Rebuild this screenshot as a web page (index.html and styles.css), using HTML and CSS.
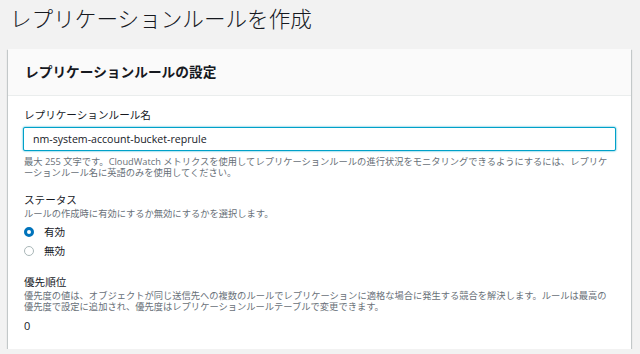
FILE: index.html
```html
<!DOCTYPE html>
<html lang="ja">
<head>
    <meta charset="UTF-8">
    <meta name="viewport" content="width=device-width, initial-scale=1.0">
    <title>レプリケーションルールを作成</title>
    <link rel="stylesheet" href="styles.css">
</head>
<body>
    <h1 class="page-title">レプリケーションルールを作成</h1>

    <div class="panel">
        <div class="panel-header">
            <h2>レプリケーションルールの設定</h2>
        </div>

        <div class="panel-body">
            <div class="form-group">
                <label for="ruleName" class="field-label">レプリケーションルール名</label>
                <input type="text" id="ruleName" class="text-input" value="nm-system-account-bucket-reprule">
                <p class="hint hint-below">最大 255 文字です。CloudWatch メトリクスを使用してレプリケーションルールの進行状況をモニタリングできるようにするには、レプリケーションルール名に英語のみを使用してください。</p>
            </div>

            <div class="form-group">
                <span class="field-label">ステータス</span>
                <p class="hint">ルールの作成時に有効にするか無効にするかを選択します。</p>
                <div class="radio-list">
                    <label class="radio-row">
                        <span class="radio checked"></span>
                        <span>有効</span>
                    </label>
                    <label class="radio-row">
                        <span class="radio"></span>
                        <span>無効</span>
                    </label>
                </div>
            </div>

            <div class="form-group">
                <span class="field-label">優先順位</span>
                <p class="hint hint-wide">優先度の値は、オブジェクトが同じ送信先への複数のルールでレプリケーションに適格な場合に発生する競合を解決します。ルールは最高の優先度で設定に追加され、優先度はレプリケーションルールテーブルで変更できます。</p>
                <div class="value">0</div>
            </div>
        </div>
    </div>
</body>
</html>
```

FILE: styles.css
```css
* {
    margin: 0;
    padding: 0;
    box-sizing: border-box;
    font-family: 'Open Sans', 'Noto Sans CJK JP', sans-serif;
}

body {
    background: #f2f2f2;
    padding: 0 9px 0 8px;
    color: #16191f;
}

.page-title {
    font-size: 21.6px;
    font-weight: 300;
    line-height: 26px;
    color: #16191f;
    margin: 6px 0 17px 2px;
}

.panel {
    background: #fff;
    box-shadow: 0 1px 1px 0 rgba(0,28,36,0.3), 1px 1px 1px 0 rgba(0,28,36,0.15), -1px 1px 1px 0 rgba(0,28,36,0.15);
}

.panel-header {
    background: #fafafa;
    border-bottom: 1px solid #eaeded;
    padding: 13px 17px 13px 17px;
}

.panel-header h2 {
    font-size: 13.7px;
    font-weight: 700;
    line-height: 20px;
}

.panel-body {
    padding: 11px 15px 15px 15px;
}

.form-group {
    margin-bottom: 14px;
}

.form-group:last-child {
    margin-bottom: 0;
}

.field-label {
    display: block;
    font-size: 10.6px;
    line-height: 16px;
    color: #16191f;
    margin-left: 1px;
}

.text-input {
    display: block;
    width: 100%;
    height: 24px;
    margin-top: 4px;
    padding: 0 9px;
    font-size: 10.6px;
    color: #16191f;
    border: 1px solid #00a1c9;
    border-radius: 2px;
    box-shadow: 0 0 2px #00a1c9;
    outline: none;
    background: #fff;
}

.hint {
    font-size: 9.27px;
    line-height: 11px;
    color: #687078;
    margin-left: 1px;
    line-break: loose;
}

.hint-below {
    margin-top: 5px;
    padding-right: 5px;
}

.hint-wide {
    padding-right: 8px;
}

.radio-list {
    margin-top: 3px;
}

.radio-row {
    display: flex;
    align-items: center;
    gap: 10px;
    height: 19px;
    font-size: 10.6px;
    color: #16191f;
}

.radio {
    width: 10px;
    height: 10px;
    margin-left: 1px;
    border-radius: 50%;
    border: 1px solid #aab7b8;
    background: #fff;
}

.radio.checked {
    border: 3px solid #0073bb;
}

.value {
    margin-top: 6px;
    margin-left: 1px;
    font-size: 11px;
    line-height: 16px;
}
```
